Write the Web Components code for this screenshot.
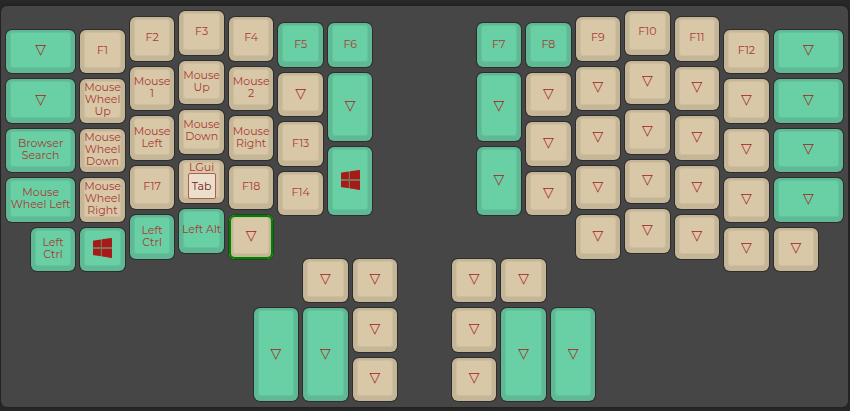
<!DOCTYPE html>
<html lang="en">
<head>
<meta charset="utf-8">
<title>Keymap</title>
<style>
  body { margin: 0; background: #282828; }
</style>
</head>
<body>
<keymap-board></keymap-board>

<template id="key-template">
  <style>
    :host {
      --cap: #c5b697;
      --edge: #d0bf9f;
      --face: #d9c8a8;
      display: block;
      margin: 3px 2px 3px 3px;
      min-width: 0;
      min-height: 0;
    }
    :host([accent]) {
      --cap: #5fb994;
      --edge: #63c49b;
      --face: #69d0a5;
    }
    button {
      display: grid;
      box-sizing: border-box;
      width: 100%;
      height: 100%;
      margin: 0;
      padding: 2px 4px 5px;
      border: 0;
      border-radius: 6px;
      background: var(--cap);
      box-shadow: 0 0 0 1px #2d2d2d;
      color: #a83a34;
      font: 400 11px/12px Montserrat, Inter, "Liberation Sans", sans-serif;
      text-align: center;
      cursor: pointer;
    }
    :host([selected]) button { box-shadow: inset 0 0 0 2px #008000, 0 0 0 1px #1d4a1d; }
    .face {
      display: flex;
      flex-direction: column;
      align-items: center;
      justify-content: center;
      min-width: 0;
      min-height: 0;
      border-radius: 4px;
      background: var(--face);
      box-shadow: inset 0 0 0 1px var(--edge);
    }
    .legend { margin: 0 -2px; }
    :host([plain]) .legend { padding-bottom: 1px; color: #a61c1c; font: 14px/16px "DejaVu Sans", sans-serif; }
  </style>
  <button type="button"><span class="face"><span class="legend"><slot></slot></span></span></button>
</template>

<template id="mod-template">
  <style>
    :host { display: flex; flex-direction: column; align-items: center; }
    .inner {
      padding: 6px 3px;
      border: 1px solid #ad5c56;
      border-radius: 2px;
      background: #ebdfcc;
      color: #6d1818;
    }
  </style>
  <slot name="mod"></slot>
  <span class="inner"><slot></slot></span>
</template>

<template id="logo-template">
  <style>
    :host { display: block; }
    svg { display: block; }
  </style>
  <svg width="19" height="20" viewBox="0 0 19 20" role="img" aria-label="Left GUI">
    <path fill="#7c7657" d="M0 3 19 0V20L0 17z"/>
    <path fill="#a81a1a" d="M0 2.7 7.8 1.5V9H0zM9 1.3 19 0V9H9zM0 11H7.8V18L0 16.9zM9 11H19V20L9 18.3z"/>
  </svg>
</template>

<template id="board-template">
  <style>
    :host {
      display: block;
      margin: 6px 2px 4px 1px;
      padding: 2px 3px 3px 2px;
      border-radius: 6px;
      background: #464646;
      box-shadow: 0 0 3px 1px #202020;
    }
    .keys {
      display: grid;
      grid-template-columns: repeat(34, minmax(0, 1fr));
      grid-template-rows: repeat(64, minmax(0, 1fr));
      aspect-ratio: 17 / 8;
    }
  </style>
  <div class="keys"></div>
</template>

<script>
  function stamp(host, id) {
    const root = host.attachShadow({ mode: "open" });
    root.append(document.getElementById(id).content.cloneNode(true));
    return root;
  }

  class WindowsLogo extends HTMLElement {
    constructor() { super(); stamp(this, "logo-template"); }
  }
  class ModLegend extends HTMLElement {
    constructor() { super(); stamp(this, "mod-template"); }
  }
  class KeyCap extends HTMLElement {
    constructor() { super(); stamp(this, "key-template"); }
  }

  const NONE = "▽";
  const WIN = "<windows-logo></windows-logo>";
  const LGUI_TAB = '<mod-legend><span slot="mod">LGui</span>Tab</mod-legend>';

  // Each stack: x in half key units, y in eighths of a unit, width in half units,
  // then its keys from top to bottom: [legend, accent, height in eighths].
  const STACKS = [
    [0, 3, 3, [[NONE, 1], [NONE, 1], ["Browser Search", 1], ["Mouse Wheel Left", 1]]],
    [1, 35, 2, [["Left Ctrl", 1]]],
    [3, 3, 2, [["F1"], ["Mouse Wheel Up"], ["Mouse Wheel Down"], ["Mouse Wheel Right"], [WIN, 1]]],
    [5, 1, 2, [["F2"], ["Mouse 1"], ["Mouse Left"], ["F17"], ["Left Ctrl", 1]]],
    [7, 0, 2, [["F3"], ["Mouse Up"], ["Mouse Down"], [LGUI_TAB], ["Left Alt", 1]]],
    [9, 1, 2, [["F4"], ["Mouse 2"], ["Mouse Right"], ["F18"], [NONE, 0, 8, true]]],
    [11, 2, 2, [["F5", 1], [NONE], ["F13"], ["F14"]]],
    [13, 2, 2, [["F6", 1], [NONE, 1, 12], [WIN, 1, 12]]],
    [19, 2, 2, [["F7", 1], [NONE, 1, 12], [NONE, 1, 12]]],
    [21, 2, 2, [["F8", 1], [NONE], [NONE], [NONE]]],
    [23, 1, 2, [["F9"], [NONE], [NONE], [NONE], [NONE]]],
    [25, 0, 2, [["F10"], [NONE], [NONE], [NONE], [NONE]]],
    [27, 1, 2, [["F11"], [NONE], [NONE], [NONE], [NONE]]],
    [29, 3, 2, [["F12"], [NONE], [NONE], [NONE], [NONE]]],
    [31, 3, 3, [[NONE, 1], [NONE, 1], [NONE, 1], [NONE, 1]]],
    [31, 35, 2, [[NONE]]],
    [10, 48, 2, [[NONE, 1, 16]]],
    [12, 40, 2, [[NONE], [NONE, 1, 16]]],
    [14, 40, 2, [[NONE], [NONE], [NONE]]],
    [18, 40, 2, [[NONE], [NONE], [NONE]]],
    [20, 40, 2, [[NONE], [NONE, 1, 16]]],
    [22, 48, 2, [[NONE, 1, 16]]]
  ];

  class KeymapBoard extends HTMLElement {
    constructor() {
      super();
      const keys = stamp(this, "board-template").querySelector(".keys");
      for (const [x, top, width, stack] of STACKS) {
        let y = top;
        for (const [legend, accent, height = 8, selected] of stack) {
          const key = document.createElement("key-cap");
          key.innerHTML = legend;
          key.toggleAttribute("accent", Boolean(accent));
          key.toggleAttribute("plain", legend === NONE);
          key.toggleAttribute("selected", Boolean(selected));
          key.style.gridColumn = `${x + 1} / span ${width}`;
          key.style.gridRow = `${y + 1} / span ${height}`;
          keys.append(key);
          y += height;
        }
      }
    }
  }

  customElements.define("windows-logo", WindowsLogo);
  customElements.define("mod-legend", ModLegend);
  customElements.define("key-cap", KeyCap);
  customElements.define("keymap-board", KeymapBoard);
</script>
</body>
</html>
